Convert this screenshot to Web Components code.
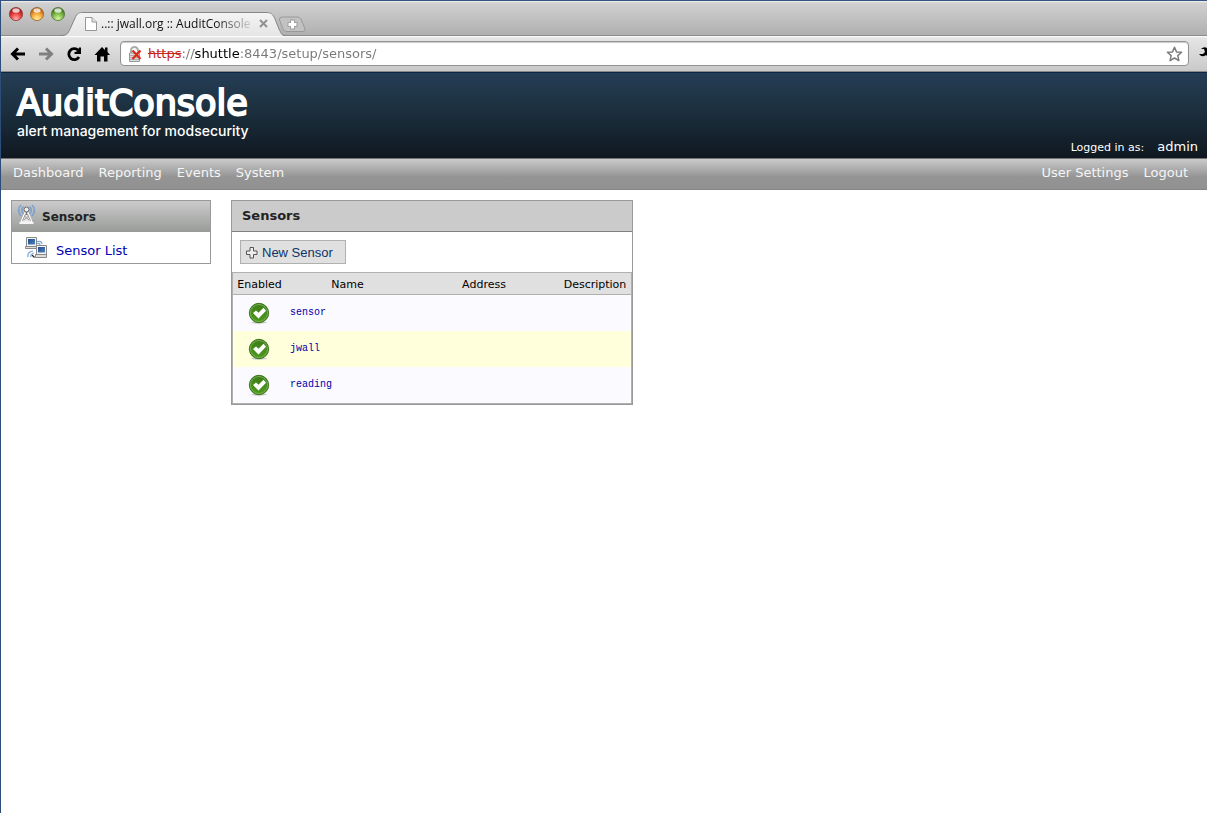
<!DOCTYPE html>
<html lang="en">
<head>
<meta charset="utf-8">
<title>..:: jwall.org :: AuditConsole ::..</title>
<style>
  html, body { margin: 0; height: 100%; }
  body { font-family: "DejaVu Sans", Verdana, sans-serif; font-size: 13px; background: #fff; overflow: hidden; }
</style>
</head>
<body>
<browser-window>
  <browser-tabs slot="chrome">..:: jwall.org :: AuditConsole ::..</browser-tabs>
  <browser-toolbar slot="chrome"></browser-toolbar>
  <console-header user="admin"></console-header>
  <console-nav>
    <a slot="main" href="#dashboard">Dashboard</a>
    <a slot="main" href="#reporting">Reporting</a>
    <a slot="main" href="#events">Events</a>
    <a slot="main" href="#system">System</a>
    <a slot="account" href="#settings">User Settings</a>
    <a slot="account" href="#logout">Logout</a>
  </console-nav>
  <console-body>
    <side-panel slot="side" heading="Sensors"><a href="#list">Sensor List</a></side-panel>
    <sensor-panel heading="Sensors" sensors="sensor,jwall,reading"></sensor-panel>
  </console-body>
</browser-window>

<script>
const define = (name, html, setup) => customElements.define(name, class extends HTMLElement {
  constructor() {
    super();
    this.attachShadow({ mode: 'open' }).innerHTML = html;
  }
  connectedCallback() { if (setup) setup(this, this.shadowRoot); }
});

define('browser-window', `
<style>
  :host { display: flex; flex-direction: column; box-sizing: border-box; min-height: 100vh; border-left: 1px solid #2b4d78; border-top: 1px solid #34557f; background: #fff; }
</style>
<slot name="chrome"></slot><slot></slot>`);

define('browser-tabs', `
<style>
  :host { display: flex; align-items: flex-end; height: 35px; box-sizing: border-box; background: linear-gradient(#f2f2f2 0, #d0d0d0 2px, #b0b0b0 34px, #8c8c8c 34px); color: #111; font-size: 11px; }
  .lights { display: flex; gap: 5px; align-self: flex-start; padding: 5px 0 0 7px; margin-right: -6px; }
  .lights button { width: 16px; height: 16px; padding: 0; border: 0; background: none; }
  svg { display: block; }
  .tab { display: grid; grid-template-columns: 225px; height: 25px; }
  .tab > * { grid-area: 1 / 1; }
  .label { display: flex; align-items: center; padding-left: 18px; height: 25px; font-family: "Open Sans", sans-serif; font-size: 12px; }
  .title { width: 150px; margin: 0 8px 0 1px; line-height: 16px; white-space: nowrap; overflow: hidden; -webkit-mask-image: linear-gradient(90deg, #000 115px, transparent 155px); }
  .label button { padding: 0; border: 0; background: none; }
  .new { align-self: flex-end; margin: 0 0 3px -8px; padding: 0; border: 0; background: none; }
</style>
<div class="lights">
  <button aria-label="Close"><svg width="16" height="16" viewBox="0 0 16 16"><defs><radialGradient id="r" cx=".5" cy=".85" r=".8"><stop offset="0" stop-color="#ffb0a8"/><stop offset=".5" stop-color="#e8423f"/><stop offset="1" stop-color="#8c1010"/></radialGradient></defs><circle cx="8" cy="8" r="6.6" fill="url(#r)" stroke="#8d3c38" stroke-width=".8"/><ellipse cx="8" cy="4.5" rx="3.6" ry="2.2" fill="#fff" opacity=".75"/></svg></button>
  <button aria-label="Minimize"><svg width="16" height="16" viewBox="0 0 16 16"><defs><radialGradient id="y" cx=".5" cy=".85" r=".8"><stop offset="0" stop-color="#fff09a"/><stop offset=".5" stop-color="#f5a83a"/><stop offset="1" stop-color="#a04c08"/></radialGradient></defs><circle cx="8" cy="8" r="6.6" fill="url(#y)" stroke="#9a6430" stroke-width=".8"/><ellipse cx="8" cy="4.5" rx="3.6" ry="2.2" fill="#fff" opacity=".75"/></svg></button>
  <button aria-label="Zoom"><svg width="16" height="16" viewBox="0 0 16 16"><defs><radialGradient id="g" cx=".5" cy=".85" r=".8"><stop offset="0" stop-color="#d8f5a0"/><stop offset=".5" stop-color="#7dba48"/><stop offset="1" stop-color="#2f6414"/></radialGradient></defs><circle cx="8" cy="8" r="6.6" fill="url(#g)" stroke="#54773e" stroke-width=".8"/><ellipse cx="8" cy="4.5" rx="3.6" ry="2.2" fill="#fff" opacity=".75"/></svg></button>
</div>
<div class="tab">
  <svg width="225" height="25" viewBox="0 0 225 25"><defs><linearGradient id="t" x1="0" y1="0" x2="0" y2="1"><stop offset="0" stop-color="#f4f4f4"/><stop offset="1" stop-color="#e5e5e5"/></linearGradient></defs><path d="M1 25C6 25 8 23 10 18L15 7C17 2 19 1 23 1H206C211 1 213 3 215 8L219 18C221 23 222 25 225 25Z" fill="url(#t)"/><path d="M1 24.500C6 24.500 8 23 10 18L15 7C17 2 19 1.500 23 1.500H206C211 1.500 213 3 215 8L219 18C221 22 222 24.500 225 24.500" fill="none" stroke="#858585"/></svg>
  <div class="label">
    <svg width="22" height="16" viewBox="0 0 22 16"><path d="M7.500 1.500H14L18.500 6V14.500H7.500Z" fill="#fff" stroke="#979797"/><path d="M14 1.500V6H18.500" fill="#e5e5e5" stroke="#979797"/></svg>
    <span class="title"><slot></slot></span>
    <button aria-label="Close tab"><svg width="9" height="9" viewBox="0 0 9 9"><path d="M1 1L8 8M8 1L1 8" stroke="#929292" stroke-width="2"/></svg></button>
  </div>
</div>
<button class="new" aria-label="New tab"><svg width="30" height="17" viewBox="0 0 30 17"><path d="M5 1H20Q23 1 24 3L28 13Q28 15.500 26 15.500H10Q7 15.500 6 13L2.500 4Q2 1 5 1Z" fill="#c2c2c2" stroke="#999"/><path d="M15.500 3.500V13.500M10.500 8.500H20.500" stroke="#999" stroke-width="4.500"/><path d="M15.500 4.500V12.500M11.500 8.500H19.500" stroke="#fff" stroke-width="3"/></svg></button>`);

define('browser-toolbar', `
<style>
  :host { display: flex; align-items: center; height: 36px; box-sizing: border-box; overflow: hidden; background: linear-gradient(#fff 0, #e5e5e5 2px, #c9c9c9 100%); border-bottom: 1px solid #898989; }
  button { flex: none; padding: 0; border: 0; background: none; }
  svg { display: block; flex: none; }
  .keys { display: flex; gap: 8px; padding-left: 7px; width: 112px; box-sizing: content-box; }
  .bar { flex: 1; min-width: 0; display: flex; align-items: center; height: 25px; box-sizing: border-box; padding: 0 5px 0 6px; border: 1px solid #929292; border-radius: 4px; background: #fff; box-shadow: inset 0 1px 1px #ccc; color: #777; font-family: "DejaVu Sans", sans-serif; font-size: 13px; line-height: 16px; }
  s { margin-left: 5px; color: #c82418; }
  input { flex: 1; min-width: 0; padding: 0; border: 0; outline: 0; font: inherit; color: #777; background: linear-gradient(90deg, #777 13px, #000 13px, #000 59px, #777 59px); -webkit-background-clip: text; background-clip: text; -webkit-text-fill-color: transparent; }
  .menu { width: 18px; overflow: hidden; padding-left: 8px; box-sizing: border-box; }
</style>
<div class="keys">
  <button aria-label="Back"><svg width="20" height="20" viewBox="0 0 20 20"><path d="M10 4.500L4.500 10L10 15.500M5 10H17" fill="none" stroke="#000" stroke-width="3"/></svg></button>
  <button aria-label="Forward"><svg width="20" height="20" viewBox="0 0 20 20"><path d="M10 4.500L15.500 10L10 15.500M15 10H3" fill="none" stroke="#808080" stroke-width="3"/></svg></button>
  <button aria-label="Reload"><svg width="20" height="20" viewBox="0 0 20 20"><path d="M14.300 6.300A5.500 5.500 0 1 0 15 13" fill="none" stroke="#000" stroke-width="2.800"/><path d="M17 3.500V10H10.500V8Q14 8 15 3.500Z"/></svg></button>
  <button aria-label="Home"><svg width="20" height="20" viewBox="0 0 20 20"><path d="M10 3L13 6V3.500H15.500V8L18 11H15.500V17.500H12V12.500H8.500V17.500H5V11H2.500Z"/></svg></button>
</div>
<div class="bar">
  <svg width="16" height="18" viewBox="0 0 16 18"><path d="M4 8V5.500A3.500 3.500 0 0 1 11 5.500V8" fill="none" stroke="#aaa" stroke-width="2"/><path d="M2.500 8H12.500V16.500H2.500Z" fill="#ddd" stroke="#999"/><path d="M3 10.500H12M3 12.500H12M3 14.500H12" stroke="#aaa"/><path d="M5.500 5.500L13.500 14M13.500 5.500L5.500 14" stroke="#de2a18" stroke-width="2.200"/></svg>
  <s>https</s><input aria-label="Address" value="://shuttle:8443/setup/sensors/">
  <svg width="18" height="18" viewBox="0 0 18 18"><path d="M9.500 2.200L11.500 6.900L16.600 7.300L12.800 10.600L13.900 15.600L9.500 13L5.100 15.600L6.200 10.600L2.400 7.300L7.500 6.900Z" fill="#fff" stroke="#7c7c7c" stroke-width="1.500" stroke-linejoin="round"/></svg>
</div>
<button class="menu" aria-label="Menu"><svg width="20" height="20" viewBox="0 0 20 20"><path d="M4 5Q7 2 10 4Q13 6 12 8L20 15L17 18L9 11Q5 14 2 10H6L8 8L7 5Z"/></svg></button>`);

define('console-header', `
<style>
  :host { display: flex; justify-content: space-between; align-items: flex-end; height: 86px; box-sizing: border-box; padding: 0 9px 2px 16px; border-top: 1px solid #0b2747; background: linear-gradient(#253e56, #1a2d3b 50%, #0f1820); color: #fff; }
  .brand { align-self: flex-start; padding-top: 10px; }
  h1 { margin: 0; font-size: 35px; font-weight: normal; line-height: 40px; -webkit-text-stroke: 2px #fff; stroke-linejoin: round; }
  p { margin: 0; font: 500 14px/16px Inter, sans-serif; }
  .user { display: flex; align-items: baseline; gap: 13px; font-size: 11px; line-height: 16px; }
  .name { font-size: 13px; }
</style>
<div class="brand"><h1>AuditConsole</h1><p>alert management for modsecurity</p></div>
<div class="user"><span>Logged in as:</span><span class="name"></span></div>`,
(host, root) => { root.querySelector('.name').textContent = host.getAttribute('user'); });

define('console-nav', `
<style>
  :host { display: block; }
  nav { display: flex; justify-content: space-between; height: 32px; box-sizing: border-box; padding: 5px 19px 0 12px; line-height: 18px; border-top: 1px solid #737373; border-bottom: 1px solid #858585; background: linear-gradient(#cacaca, #949494 60%, #919191); }
  div { display: flex; gap: 15px; }
  ::slotted(a) { color: #f5f5f5; text-decoration: none; }
</style>
<nav><div><slot name="main"></slot></div><div><slot name="account"></slot></div></nav>`);

define('console-body', `
<style>
  :host { display: flex; align-items: flex-start; gap: 20px; padding: 10px; }
  aside { flex: none; width: 200px; }
  main { flex: none; width: 402px; }
</style>
<aside><slot name="side"></slot></aside><main><slot></slot></main>`);

define('side-panel', `
<style>
  :host { display: block; border: 1px solid #999; background: #fff; }
  h2 { display: flex; align-items: center; gap: 4px; height: 31px; box-sizing: border-box; margin: 0; padding-left: 4px; border-bottom: 1px solid #999; background: linear-gradient(#cacbca, #9b9d9b); color: #222; font-size: 12px; }
  h2 svg { align-self: flex-start; margin-top: 2px; }
  .heading { padding-top: 2px; }
  .item { display: flex; align-items: center; gap: 9px; height: 31px; padding-left: 12px; }
  .item span { padding-top: 6px; }
  ::slotted(a) { color: #0000b4; text-decoration: none; }
</style>
<h2><svg width="22" height="22" viewBox="0 0 22 22"><g fill="none" stroke="#7ba0cf" stroke-width="1.600"><path d="M5 2Q0 7 5 13M7.500 3.500Q4 7 7.500 11M16 2Q21 7 16 13M13.500 3.500Q17 7 13.500 11"/></g><path d="M9 10L5 19.500H16L12 10Z" fill="#e8e8e8" stroke="#fff" stroke-width="1.500"/><path d="M9.500 11L6.500 18M11.500 11L14.500 18M8.500 13L13 17M12.500 13L8 17" stroke="#999"/><path d="M10.500 8V12" stroke="#777" stroke-width="1.500"/><circle cx="10.500" cy="6.500" r="2.500" fill="#eee" stroke="#666"/><path d="M3.500 20H17.500" stroke="#f4f4f4" stroke-width="2"/></svg><span class="heading"></span></h2>
<div class="item"><svg width="23" height="23" viewBox="0 0 23 23"><defs><linearGradient id="s" x1="0" y1="0" x2="1" y2="1"><stop offset="0" stop-color="#1f4b8c"/><stop offset="1" stop-color="#4f83bd"/></linearGradient></defs><g stroke="#888"><path d="M2.500 1.500H12.500V10.500H2.500Z" fill="#f4f4f0"/><path d="M1.500 10.500H13.500V12.500H1.500Z" fill="#ddd"/></g><path d="M4 3H11V8.500H4Z" fill="url(#s)"/><g fill="none" stroke="#79a4d7" stroke-width="1.200"><path d="M13 5.500Q18 4.500 18 8M13 7.500Q16 7 16 9M4 21Q3 16 9 15M7 21Q6 18 10 17"/></g><g stroke="#888"><path d="M12.500 9.500H22.500V18.500H12.500Z" fill="#f4f4f0"/><path d="M11.500 18.500H22.500V21.500H11.500Z" fill="#ddd"/></g><path d="M14 11H21V16.500H14Z" fill="url(#s)"/><path d="M8 19L10.500 21.500" stroke="#222" stroke-width="1.300"/></svg><span><slot></slot></span></div>`,
(host, root) => { root.querySelector('.heading').textContent = host.getAttribute('heading'); });

define('status-tick', `
<style>:host { display: block; width: 22px; height: 22px; margin: 0 auto; } svg { display: block; }</style>
<svg width="22" height="22" viewBox="0 0 22 22" role="img" aria-label="Enabled"><defs><linearGradient id="a" x1="0" y1="0" x2="0" y2="1"><stop offset="0" stop-color="#3c7d18"/><stop offset="1" stop-color="#4d9a1e"/></linearGradient></defs><ellipse cx="11" cy="20.500" rx="8" ry="1.200" fill="#ccc"/><circle cx="11" cy="11" r="9.700" fill="url(#a)" stroke="#2c6410" stroke-width=".8"/><circle cx="11" cy="11" r="8.500" fill="none" stroke="#83b85d" stroke-width=".8"/><path d="M5 11L8 8.500L10.500 10.700L15.500 5.700L18 8.700L10.500 16.500Z" fill="#fff"/></svg>`);

define('sensor-panel', `
<style>
  :host { display: block; border: 1px solid #999; background: #fff; }
  h2 { height: 31px; box-sizing: border-box; margin: 0; padding: 6px 10px; line-height: 18px; border-bottom: 1px solid #808080; background: #cbcbcb; color: #222; font-size: 13px; }
  .tools { display: flex; padding: 8px; }
  button { display: flex; align-items: center; gap: 4px; width: 106px; height: 24px; box-sizing: border-box; padding: 0 4px; border: 1px solid #b0b0b0; border-radius: 0; background: #e0e0e0; color: #0b3468; font: 13px "Liberation Sans", Arial, sans-serif; white-space: nowrap; }
  button svg { flex: none; }
  table { width: 100%; table-layout: fixed; border-collapse: separate; border-spacing: 0; border: 1px solid #b0b0b0; }
  th { height: 19px; padding: 2px 0 0; border-bottom: 1px solid #b0b0b0; background: #e0e0e0; color: #000; font-size: 11px; font-weight: normal; text-align: center; }
  th:nth-child(1) { width: 53px; } th:nth-child(2) { width: 123px; } th:nth-child(3) { width: 150px; }
  td { height: 36px; padding: 0; background: #fafaff; }
  td:first-child { padding-right: 2px; }
  tr:nth-child(even) td { background: #ffffdc; }
  td:nth-child(2) { padding: 0 4px 6px; height: 30px; }
  td a { color: #0000a8; text-decoration: none; font: 10px "Liberation Mono", "Courier New", monospace; }
</style>
<h2></h2>
<div class="tools"><button type="button"><svg width="13" height="13" viewBox="0 0 13 13"><path d="M5 1.500H8.500V5H12V8.500H8.500V12H5V8.500H1.500V5H5Z" fill="#eee" stroke="#555"/></svg>New Sensor</button></div>
<table><thead><tr><th>Enabled</th><th>Name</th><th>Address</th><th>Description</th></tr></thead><tbody></tbody></table>`,
(host, root) => {
  root.querySelector('h2').textContent = host.getAttribute('heading');
  root.querySelector('tbody').innerHTML = host.getAttribute('sensors').split(',').map(name =>
    `<tr><td><status-tick></status-tick></td><td><a href="#${name}">${name}</a></td><td></td><td></td></tr>`).join('');
});
</script>
</body>
</html>
